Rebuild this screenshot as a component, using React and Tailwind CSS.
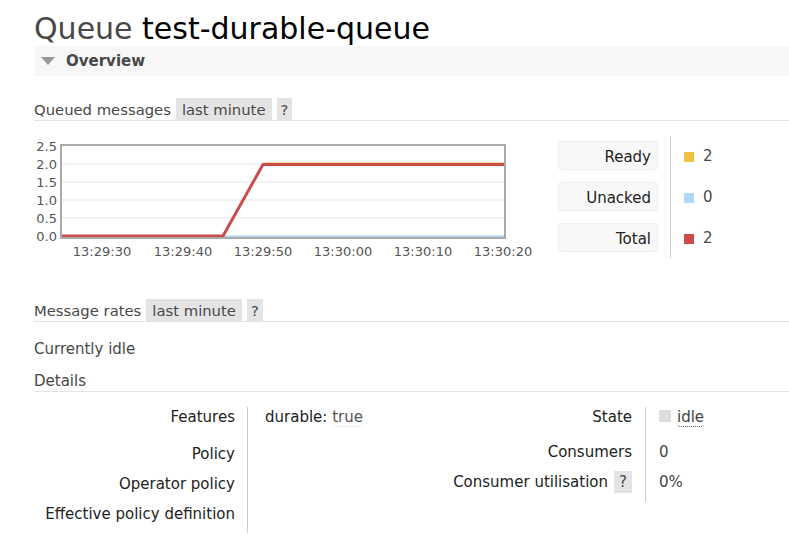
import React from "react";

const font = { fontFamily: '"DejaVu Sans", Verdana, sans-serif' };

function Header({ title, badges }) {
  return (
    <div className="flex items-end border-b border-[#e4e4e4] h-[23px] text-[14.8px]">
      <span className="text-[#484848] leading-[24px] h-[22px] mr-[5px]">{title}</span>
      {badges &&
        badges.map((b, i) => (
          <span
            key={i}
            className={
              "bg-[#e4e4e4] text-[#484848] leading-[24px] h-[22px] mr-[5px] overflow-hidden " +
              (b === "?" ? "px-[4px]" : "px-[6px]")
            }
          >
            {b}
          </span>
        ))}
    </div>
  );
}

function Chart() {
  const yLabels = [
    ["2.5", 10],
    ["2.0", 28],
    ["1.5", 46],
    ["1.0", 64],
    ["0.5", 82],
    ["0.0", 100],
  ];
  const xLabels = [
    ["13:29:30", 68],
    ["13:29:40", 149],
    ["13:29:50", 229],
    ["13:30:00", 309],
    ["13:30:10", 389],
    ["13:30:20", 469],
  ];
  return (
    <svg width="506" height="124" className="block shrink-0">
      {[28, 46, 64, 82].map((y) => (
        <line key={y} x1="28" x2="470" y1={y} y2={y} stroke="#eeeeee" strokeWidth="1.5" />
      ))}
      <polyline points="189,101 470,101" fill="none" stroke="#afd8f8" strokeWidth="3" />
      <polyline points="229,27.5 470,27.5" fill="none" stroke="#edc240" strokeWidth="2" />
      <polyline
        points="28,100 189,100 229,28.5 470,28.5"
        fill="none"
        stroke="#cb4b4b"
        strokeWidth="3"
        strokeLinejoin="round"
      />
      <rect x="27" y="9" width="444" height="93" fill="none" stroke="#aaaaaa" strokeWidth="2" />
      {yLabels.map(([t, y]) => (
        <text key={t} x="23" y={y + 5} textAnchor="end" fontSize="13" fill="#545454" style={font}>
          {t}
        </text>
      ))}
      {xLabels.map(([t, x]) => (
        <text key={t} x={x} y="120" textAnchor="middle" fontSize="13" fill="#545454" style={font}>
          {t}
        </text>
      ))}
    </svg>
  );
}

function Legend() {
  const items = [
    ["Ready", "#edc240", "2"],
    ["Unacked", "#afd8f8", "0"],
    ["Total", "#cb4b4b", "2"],
  ];
  return (
    <div className="flex ml-[18px]">
      <div className="flex flex-col gap-[12px] pt-[5px]">
        {items.map(([l]) => (
          <div
            key={l}
            className="w-[100px] h-[29px] bg-[#f8f8f8] border border-[#efefef] rounded-[3px] text-right pr-[6px] leading-[30px] overflow-hidden text-[#222]"
          >
            {l}
          </div>
        ))}
      </div>
      <div className="ml-[12px] h-[122px] border-l border-[#cccccc] pl-[13px] flex flex-col gap-[12px] pt-[6px]">
        {items.map(([l, c, v]) => (
          <div key={l} className="h-[29px] flex items-center">
            <span className="w-[10px] h-[10px] mr-[9px]" style={{ background: c }} />
            <span className="text-[#484848]">{v}</span>
          </div>
        ))}
      </div>
    </div>
  );
}

export default function App() {
  return (
    <div className="bg-white w-[789px] h-[539px] overflow-hidden text-[15px]" style={font}>
      <div className="pl-[34px]">
        <h1 className="pt-[10px] h-[46px] leading-[37px] text-[30px] font-normal">
          <span className="text-[#484848]">Queue </span>
          <span className="text-black">test-durable-queue</span>
        </h1>
        <div className="h-[30px] bg-[#f7f7f7] flex items-center">
          <span
            className="ml-[7px] w-0 h-0 border-l-[7px] border-r-[7px] border-t-[8px] border-l-transparent border-r-transparent border-t-[#999999]"
          />
          <span className="ml-[11px] font-bold text-[#484848] leading-[32px]">Overview</span>
        </div>

        <div className="mt-[22px]">
          <Header title="Queued messages" badges={["last minute", "?"]} />
        </div>

        <div className="flex mt-[15px] h-[124px]">
          <Chart />
          <Legend />
        </div>

        <div className="mt-[39px]">
          <Header title="Message rates" badges={["last minute", "?"]} />
        </div>

        <div className="mt-[18px] leading-[18px] text-[#484848]">Currently idle</div>

        <div className="mt-[13px] border-b border-[#e4e4e4] h-[21px] pt-[1px] leading-[18px] text-[#484848]">
          Details
        </div>

        <div className="flex mt-[15px] leading-[18px]">
          <div className="flex w-[406px]">
            <div className="w-[201px] text-right text-[#222] pt-[1px]">
              <div className="h-[37px]">Features</div>
              <div className="h-[30px]">Policy</div>
              <div className="h-[30px]">Operator policy</div>
              <div className="h-[28px]">Effective policy definition</div>
            </div>
            <div className="ml-[12px] border-l border-[#cccccc] h-[126px] pl-[17px] pt-[1px]">
              <div className="h-[37px] text-[#222]">
                durable:{" "}
                <span className="text-[#555] border-b border-dotted border-[#dddddd] rounded-b-[4px]">
                  true
                </span>
              </div>
            </div>
          </div>
          <div className="flex">
            <div className="w-[192px] text-right text-[#222] pt-[1px]">
              <div className="h-[35px]">State</div>
              <div className="h-[30px]">Consumers</div>
              <div className="h-[29px] flex justify-end items-start">
                <span>Consumer utilisation</span>
                <span className="ml-[6px] -mt-[2px] h-[22px] leading-[23px] px-[5px] bg-[#e4e4e4] text-[#484848]">
                  ?
                </span>
              </div>
            </div>
            <div className="ml-[13px] border-l border-[#cccccc] h-[95px] pl-[13px] pt-[1px] text-[#444]">
              <div className="h-[35px] flex items-start">
                <span className="mt-[2px] w-[12px] h-[12px] bg-[#dddddd] mr-[6px]" />
                <span className="border-b border-dotted border-[#555] rounded-b-[4px] leading-[18px]">
                  idle
                </span>
              </div>
              <div className="h-[30px]">0</div>
              <div className="h-[29px]">0%</div>
            </div>
          </div>
        </div>
      </div>
    </div>
  );
}
